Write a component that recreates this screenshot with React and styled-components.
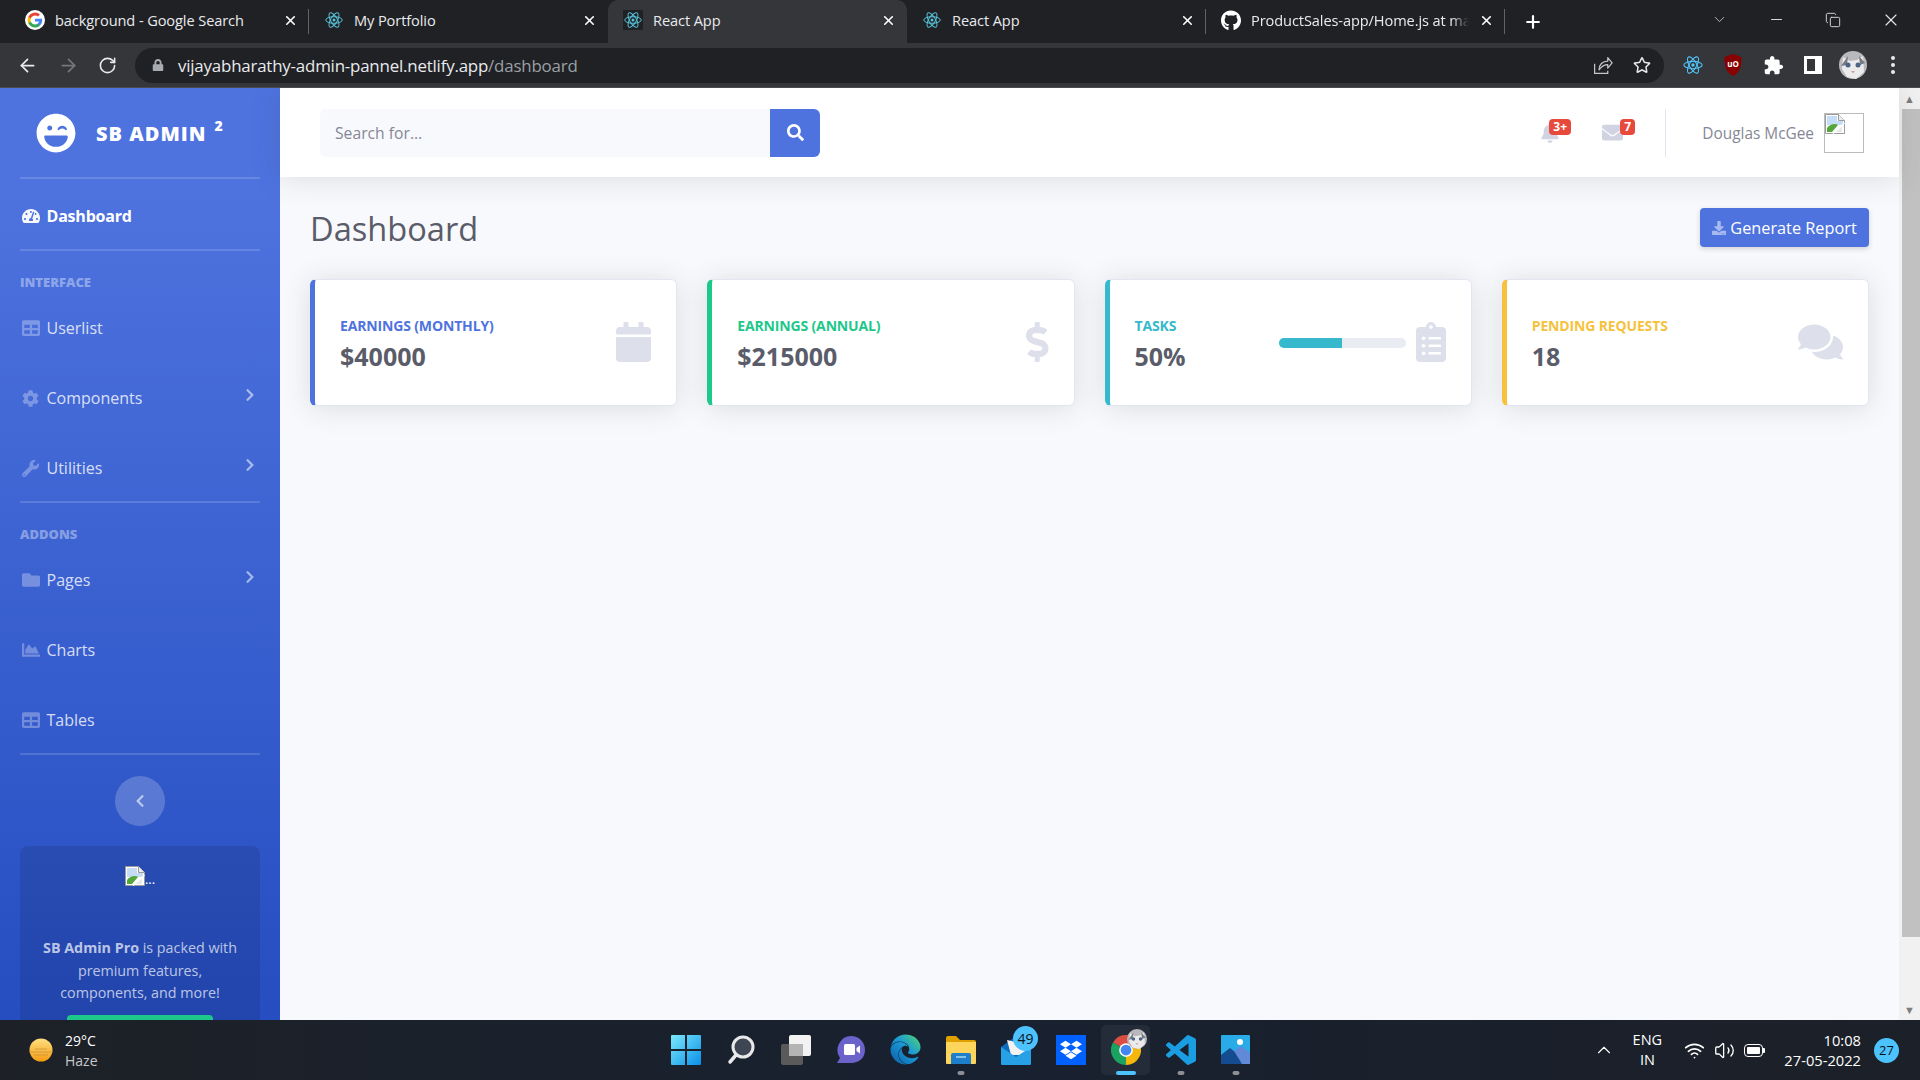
import React from 'react';
import styled, { createGlobalStyle } from 'styled-components';
import {
  FaBell, FaCalendar, FaChartArea, FaChevronLeft, FaChevronRight, FaClipboardList, FaCog, FaComments,
  FaDollarSign, FaDownload, FaDropbox, FaEdge, FaEnvelope, FaFolder, FaGithub, FaLaughWink, FaLock,
  FaSearch, FaRegStar, FaTable, FaTachometerAlt, FaWrench,
} from 'react-icons/fa';
import { ArrowLeft, ArrowRight, ChevronDown, ChevronUp, Copy, Minus, Plus, RotateCw, Volume2, Wifi, X } from 'lucide-react';

const GlobalStyle = createGlobalStyle`
  html, body { margin: 0; padding: 0; height: 100%; overflow: hidden; }
  body { font-family: "Open Sans", "Noto Sans", sans-serif; }
  * { box-sizing: border-box; }
`;

const ReactLogo = ({ size = 18, color = '#58c4dc' }) => (
  <svg width={size} height={size} viewBox="0 0 24 24" fill="none" stroke={color} strokeWidth="1.3">
    <ellipse cx="12" cy="12" rx="11" ry="4.4" />
    <ellipse cx="12" cy="12" rx="11" ry="4.4" transform="rotate(60 12 12)" />
    <ellipse cx="12" cy="12" rx="11" ry="4.4" transform="rotate(120 12 12)" />
    <circle cx="12" cy="12" r="2" fill={color} stroke="none" />
  </svg>
);

const GoogleLogo = () => (
  <svg width="20" height="20" viewBox="0 0 24 24">
    <circle cx="12" cy="12" r="12" fill="#fff" />
    <path d="M20.6 12.2c0-.6-.1-1.2-.2-1.8H12v3.4h4.8a4.1 4.1 0 0 1-1.8 2.7v2.2h2.9c1.700-1.600 2.700-3.900 2.700-6.500z" fill="#4285f4" />
    <path d="M12 21c2.400 0 4.500-.8 5.900-2.200L15 16.500c-.8.500-1.800.9-3 .9-2.300 0-4.300-1.600-5-3.700H4v2.300A9 9 0 0 0 12 21z" fill="#34a853" />
    <path d="M7 13.700a5.400 5.400 0 0 1 0-3.400V8H4a9 9 0 0 0 0 8l3-2.300z" fill="#fbbc05" />
    <path d="M12 6.600c1.300 0 2.500.5 3.400 1.300L18 5.400A9 9 0 0 0 4 8l3 2.300c.7-2.100 2.700-3.700 5-3.700z" fill="#ea4335" />
  </svg>
);

const BrokenImage = () => (
  <svg width="20" height="20" viewBox="0 0 20 20">
    <path d="M.5.5h13l6 6v13H.5z" fill="#fff" stroke="#9a9a9a" />
    <path d="M13.500.5v6h6" fill="#eee" stroke="#9a9a9a" />
    <path d="M2 2h10v5h6v4H2z" fill="#c5dcf6" />
    <path d="M2 18v-4c3-4 8-5 11-3l-6 7z" fill="#55a63a" />
    <path d="M10 18l7-7v7z" fill="#e8e8e8" />
    <path d="M8 19.500L19.500 9" stroke="#fff" strokeWidth="1.500" />
  </svg>
);

const ShareGlyph = () => (
  <svg width="21" height="21" viewBox="0 0 24 24" fill="none" stroke="#c4c7c5" strokeWidth="1.400">
    <path d="M3 10v11h15v-3" />
    <path d="M8 17c0-6 4-10 10-10V3l5 6-5 6v-4c-4 0-7 2-10 6z" strokeLinejoin="round" />
  </svg>
);

const UBlock = () => (
  <svg width="20" height="24" viewBox="0 0 20 24">
    <path d="M10 1l8.500 3c0 9-1 15-8.500 19C2.500 19 1.500 13 1.500 4z" fill="#800" />
    <text x="10" y="14" textAnchor="middle" fontSize="8" fontWeight="700" fill="#fff" fontFamily="Open Sans">uO</text>
  </svg>
);

const PuzzleGlyph = () => (
  <svg width="21" height="21" viewBox="0 0 24 24" fill="#fff">
    <path d="M20.500 11H19V7c0-1.100-.9-2-2-2h-4V3.500C13 2.120 11.880 1 10.500 1S8 2.120 8 3.500V5H4c-1.100 0-1.990.9-1.990 2v3.800H3.500c1.490 0 2.700 1.210 2.700 2.700s-1.210 2.700-2.700 2.700H2V20c0 1.100.9 2 2 2h3.800v-1.500c0-1.490 1.210-2.700 2.700-2.700 1.490 0 2.700 1.210 2.700 2.700V22H17c1.100 0 2-.9 2-2v-4h1.500c1.380 0 2.500-1.120 2.500-2.500S21.880 11 20.500 11z" />
  </svg>
);

const SidePanel = () => (
  <svg width="18" height="18" viewBox="0 0 18 18">
    <path d="M0 0h18v18H0z" fill="#fff" />
    <path d="M3 3h8v12H3z" fill="#35363a" />
  </svg>
);

const CatAvatar = ({ size = 28 }) => (
  <svg width={size} height={size} viewBox="0 0 28 28">
    <circle cx="14" cy="14" r="14" fill="#b9b9bd" />
    <path d="M4 6l7 4 7-1 6-4 1 16-8 7-9-2-5-8z" fill="#ecebec" />
    <path d="M2 15l7-10-1 9zM26 12l-6-7 1 9z" fill="#777a80" />
    <circle cx="9" cy="14" r="2.500" fill="#4c6486" />
    <circle cx="19" cy="14" r="2.500" fill="#4c6486" />
    <path d="M12 20h4l-2 2.500z" fill="#c9a2a6" />
  </svg>
);

const Win11Logo = () => (
  <svg width="30" height="30" viewBox="0 0 30 30">
    <defs>
      <linearGradient id="winG" x1="0" y1="0" x2="1" y2="1">
        <stop offset="0" stopColor="#7ceafc" />
        <stop offset="1" stopColor="#0a8fe8" />
      </linearGradient>
    </defs>
    <path d="M0 1a1 1 0 0 1 1-1h13v14H0zM16 0h13a1 1 0 0 1 1 1v13H16zM0 16h14v14H1a1 1 0 0 1-1-1zM16 16h14v13a1 1 0 0 1-1 1H16z" fill="url(#winG)" />
  </svg>
);

const SearchGlyph = () => (
  <svg width="28" height="30" viewBox="0 0 28 30">
    <circle cx="16" cy="12" r="10" fill="#3e4653" stroke="#e9e9e9" strokeWidth="3" />
    <path d="M9 20l-6 7" stroke="#e9e9e9" strokeWidth="3.500" strokeLinecap="round" />
  </svg>
);

const TaskView = () => (
  <svg width="30" height="30" viewBox="0 0 30 30">
    <rect x="0" y="9" width="22" height="21" rx="2" fill="#5a5a5a" />
    <rect x="8" y="0" width="22" height="21" rx="2" fill="#f2f2f2" />
    <rect x="8" y="9" width="14" height="12" fill="#b4b4b4" />
  </svg>
);

const ChatGlyph = () => (
  <svg width="30" height="30" viewBox="0 0 30 30">
    <path d="M15 1c8 0 14 6 14 14s-6 13-14 13H1l3-5a14 14 0 0 1 11-22z" fill="#6b63c9" />
    <rect x="8" y="9" width="11" height="11" rx="1.500" fill="#fff" />
    <path d="M20.500 13l3.500-2.500v8L20.500 16z" fill="#fff" />
  </svg>
);

const EdgeGlyph = () => (
  <>
    <svg width="0" height="0" style={{ position: 'absolute' }}>
      <defs>
        <linearGradient id="edgeG" x1="0" y1="1" x2="1" y2="0">
          <stop offset="0" stopColor="#0b5aa8" />
          <stop offset=".55" stopColor="#1a9ad6" />
          <stop offset="1" stopColor="#53d96a" />
        </linearGradient>
      </defs>
    </svg>
    <FaEdge size={31} fill="url(#edgeG)" />
  </>
);

const FolderGlyph = () => (
  <svg width="30" height="30" viewBox="0 0 30 30">
    <path d="M0 3a2 2 0 0 1 2-2h8l4 4h14a2 2 0 0 1 2 2v3H0z" fill="#e0a100" />
    <path d="M0 7h30v21a1 1 0 0 1-1 1H1a1 1 0 0 1-1-1z" fill="#fdd55c" />
    <path d="M5 29v-9a2 2 0 0 1 2-2h16a2 2 0 0 1 2 2v9z" fill="#1d7fc9" />
    <path d="M10 22h10" stroke="#a8d8f5" strokeWidth="1.500" />
  </svg>
);

const MailGlyph = () => (
  <svg width="30" height="30" viewBox="0 0 30 30">
    <path d="M0 12L15 1l15 11v17H0z" fill="#0f6cbd" />
    <path d="M6 5l18 4v11H10z" fill="#f2f2f2" />
    <path d="M0 12l15 10 15-10v17a1 1 0 0 1-1 1H1a1 1 0 0 1-1-1z" fill="#27a0e6" />
  </svg>
);

const DropboxTile = styled.div`
  width: 30px;
  height: 30px;
  background: #0061fe;
  display: flex;
  align-items: center;
  justify-content: center;
  color: #fff;
`;

const ChromeGlyph = () => (
  <svg width="30" height="30" viewBox="0 0 24 24">
    <path d="M12 12L1.600 6A12 12 0 0 1 22.400 6z" fill="#db4437" />
    <path d="M12 12L1.600 6A12 12 0 0 0 12 24z" fill="#0f9d58" />
    <path d="M12 12l10.400-6A12 12 0 0 1 12 24z" fill="#f4b400" />
    <circle cx="12" cy="12" r="5.500" fill="#fff" />
    <circle cx="12" cy="12" r="4.300" fill="#3a80f0" />
  </svg>
);

const VsCode = () => (
  <svg width="30" height="30" viewBox="0 0 24 24">
    <path d="M23.150 2.587L18.210.21a1.494 1.494 0 0 0-1.705.29l-9.460 8.630-4.120-3.128a.999.999 0 0 0-1.276.057L.327 7.261A1 1 0 0 0 .326 8.740L3.899 12 .326 15.260a1 1 0 0 0 .001 1.479L1.650 17.940a.999.999 0 0 0 1.276.057l4.120-3.128 9.460 8.630a1.492 1.492 0 0 0 1.704.29l4.942-2.377A1.500 1.500 0 0 0 24 20.060V3.939a1.500 1.500 0 0 0-.85-1.352zm-5.146 14.861L10.826 12l7.178-5.448v10.896z" fill="#1b9de2" />
  </svg>
);

const PhotosGlyph = () => (
  <svg width="29" height="29" viewBox="0 0 29 29">
    <rect width="29" height="29" rx="1" fill="#29abe8" />
    <circle cx="19" cy="7" r="3" fill="#fff" />
    <path d="M0 29V20l9-7 10 8 2 8z" fill="#154b8f" />
    <path d="M13 16l7-5 9 7v11h-8z" fill="#6288d8" />
  </svg>
);

const HazeSun = () => (
  <svg width="26" height="24" viewBox="0 0 26 24">
    <defs>
      <linearGradient id="sunG" x1="0" y1="0" x2="0" y2="1">
        <stop offset="0" stopColor="#ffdf80" />
        <stop offset="1" stopColor="#f59c12" />
      </linearGradient>
    </defs>
    <circle cx="13" cy="12" r="11.500" fill="url(#sunG)" />
    <path d="M7 11h12M1 14h24M6 17h14" stroke="#b98a3a" strokeWidth="1" opacity=".6" />
  </svg>
);

const tabs = [
  { title: 'background - Google Search', icon: <GoogleLogo />, sep: true },
  { title: 'My Portfolio', icon: <ReactLogo /> },
  { title: 'React App', icon: <ReactLogo />, active: true },
  { title: 'React App', icon: <ReactLogo />, sep: true },
  { title: 'ProductSales-app/Home.js at main', icon: <FaGithub size={21} color="#fff" />, sep: true, fade: true },
];

const stats = [
  { label: 'Earnings (Monthly)', value: '$40000', color: '#4e73df', icon: <FaCalendar />, iconWidth: 35 },
  { label: 'Earnings (Annual)', value: '$215000', color: '#1cc88a', icon: <FaDollarSign />, iconWidth: 22.5 },
  { label: 'Tasks', value: '50%', color: '#36b9cc', progress: 50, icon: <FaClipboardList />, iconWidth: 30 },
  { label: 'Pending Requests', value: '18', color: '#f6c23e', icon: <FaComments />, iconWidth: 45 },
];

function App() {
  return (
    <Screen>
      <GlobalStyle />
      <TabStrip>
        {tabs.map((t, i) => (
          <Tab key={i} $active={t.active} $sep={t.sep}>
            <Favicon $active={t.active}>{t.icon}</Favicon>
            <TabTitle $fade={t.fade}>{t.title}</TabTitle>
            <X size={15} strokeWidth={2.6} color="#fff" />
          </Tab>
        ))}
        <NewTab><Plus size={20} strokeWidth={2.6} /></NewTab>
        <WindowControls>
          <ChevronDown size={17} strokeWidth={1.2} color="#ccc" />
          <Minus size={17} strokeWidth={1.3} />
          <Copy size={16} strokeWidth={1.3} />
          <X size={20} strokeWidth={1.3} />
        </WindowControls>
      </TabStrip>

      <Toolbar>
        <ToolButton><ArrowLeft size={21} strokeWidth={2} /></ToolButton>
        <ToolButton $muted><ArrowRight size={21} strokeWidth={2} /></ToolButton>
        <ToolButton><RotateCw size={19} strokeWidth={2} /></ToolButton>
        <Omnibox>
          <FaLock size={12} color="#a8abb0" />
          <Url>vijayabharathy-admin-pannel.netlify.app<UrlPath>/dashboard</UrlPath></Url>
          <OmniIcons>
            <ShareGlyph />
            <FaRegStar size={18} color="#e8eaed" />
          </OmniIcons>
        </Omnibox>
        <Extensions>
          <ExtTile><ReactLogo size={20} color="#4fc3f7" /></ExtTile>
          <ExtTile><UBlock /></ExtTile>
          <ExtTile><PuzzleGlyph /></ExtTile>
          <ExtTile><SidePanel /></ExtTile>
          <ExtTile><CatAvatar /></ExtTile>
          <ExtTile><Dots><i /><i /><i /></Dots></ExtTile>
        </Extensions>
      </Toolbar>

      <Viewport>
        <Sidebar>
          <Brand>
            <FaLaughWink size={40} color="#fff" />
            <BrandText>SB ADMIN <sup>2</sup></BrandText>
          </Brand>
          <Divider />
          <NavItem $active><NavIcon><FaTachometerAlt size={18} /></NavIcon>Dashboard</NavItem>
          <Divider />
          <NavHeading>INTERFACE</NavHeading>
          <NavItem><NavIcon><FaTable size={18} /></NavIcon>Userlist</NavItem>
          <NavItem><NavIcon><FaCog size={17} /></NavIcon>Components<NavArrow><FaChevronRight size={14} /></NavArrow></NavItem>
          <NavItem><NavIcon><FaWrench size={17} /></NavIcon>Utilities<NavArrow><FaChevronRight size={14} /></NavArrow></NavItem>
          <Divider />
          <NavHeading>ADDONS</NavHeading>
          <NavItem><NavIcon><FaFolder size={18} /></NavIcon>Pages<NavArrow><FaChevronRight size={14} /></NavArrow></NavItem>
          <NavItem><NavIcon><FaChartArea size={18} /></NavIcon>Charts</NavItem>
          <NavItem><NavIcon><FaTable size={18} /></NavIcon>Tables</NavItem>
          <Divider />
          <SidebarToggle><FaChevronLeft size={14} /></SidebarToggle>
          <PromoCard>
            <PromoImage><BrokenImage /><span>...</span></PromoImage>
            <PromoText><strong>SB Admin Pro</strong> is packed with premium features, components, and more!</PromoText>
            <PromoButton />
          </PromoCard>
        </Sidebar>

        <Main>
          <Topbar>
            <SearchBox>
              <SearchInput>Search for...</SearchInput>
              <SearchButton><FaSearch size={17} /></SearchButton>
            </SearchBox>
            <TopbarRight>
              <AlertIcon>
                <FaBell size={20} />
                <Badge $left={9}>3+</Badge>
              </AlertIcon>
              <AlertIcon>
                <FaEnvelope size={21} />
                <Badge $left={18}>7</Badge>
              </AlertIcon>
              <TopDivider />
              <UserName>Douglas McGee</UserName>
              <Avatar><BrokenImage /></Avatar>
            </TopbarRight>
          </Topbar>

          <Content>
            <TitleRow>
              <PageTitle>Dashboard</PageTitle>
              <ReportButton><FaDownload size={14} color="rgba(255,255,255,.5)" />Generate Report</ReportButton>
            </TitleRow>
            <CardGrid>
              {stats.map(s => (
                <StatCard key={s.label} $color={s.color}>
                  <StatInfo>
                    <StatLabel $color={s.color}>{s.label}</StatLabel>
                    <StatValue>{s.value}</StatValue>
                  </StatInfo>
                  {s.progress && (
                    <Progress><ProgressFill $color={s.color} style={{ width: `${s.progress}%` }} /></Progress>
                  )}
                  <StatIcon $w={s.iconWidth}>{s.icon}</StatIcon>
                </StatCard>
              ))}
            </CardGrid>
          </Content>
        </Main>

        <Scrollbar>
          <ScrollArrow>▲</ScrollArrow>
          <ScrollThumb />
          <ScrollArrow>▼</ScrollArrow>
        </Scrollbar>
      </Viewport>

      <Taskbar>
        <Weather>
          <HazeSun />
          <WeatherText>
            <div>29°C</div>
            <WeatherSub>Haze</WeatherSub>
          </WeatherText>
        </Weather>
        <TaskIcons>
          <TaskCell><Win11Logo /></TaskCell>
          <TaskCell><SearchGlyph /></TaskCell>
          <TaskCell><TaskView /></TaskCell>
          <TaskCell><ChatGlyph /></TaskCell>
          <TaskCell><EdgeGlyph /></TaskCell>
          <TaskCell $dot><FolderGlyph /></TaskCell>
          <TaskCell><MailGlyph /><MailBadge>49</MailBadge></TaskCell>
          <TaskCell><DropboxTile><FaDropbox size={22} /></DropboxTile></TaskCell>
          <TaskCell $active>
            <ChromeGlyph />
            <ChromeAvatar><CatAvatar size={20} /></ChromeAvatar>
          </TaskCell>
          <TaskCell $dot><VsCode /></TaskCell>
          <TaskCell $dot><PhotosGlyph /></TaskCell>
        </TaskIcons>
        <Tray>
          <ChevronUp size={22} strokeWidth={1.2} />
          <Lang>ENG<br />IN</Lang>
          <TrayIcons>
            <Wifi size={21} strokeWidth={2} />
            <Volume2 size={21} strokeWidth={1.5} />
            <Battery><BatteryFill /></Battery>
          </TrayIcons>
          <Clock>10:08<br />27-05-2022</Clock>
          <NotifyBadge>27</NotifyBadge>
        </Tray>
      </Taskbar>
    </Screen>
  );
}

const Screen = styled.div`
  width: 1920px;
  height: 1080px;
  display: flex;
  flex-direction: column;
  overflow: hidden;
  background: #f8f9fc;
`;

const TabStrip = styled.div`
  height: 43px;
  flex: none;
  display: flex;
  padding-left: 10px;
  background: #202124;
  color: #e8eaed;
`;

const Tab = styled.div`
  position: relative;
  width: 299px;
  display: flex;
  align-items: center;
  padding: 0 11px 3px 15px;
  gap: 10px;
  font-size: 14.6px;
  letter-spacing: -0.1px;
  border-radius: 10px 10px 0 0;
  background: ${p => (p.$active ? '#35363a' : 'transparent')};
  &::after {
    content: '';
    display: ${p => (p.$sep ? 'block' : 'none')};
    position: absolute;
    right: 0;
    top: 9px;
    height: 25px;
    width: 1px;
    background: #5f6368;
  }
`;

const Favicon = styled.div`
  width: 20px;
  height: 20px;
  flex: none;
  display: flex;
  align-items: center;
  justify-content: center;
  background: ${p => (p.$active ? '#202124' : 'transparent')};
`;

const TabTitle = styled.div`
  flex: 1;
  white-space: nowrap;
  overflow: hidden;
  color: #e8eaed;
  ${p => p.$fade && 'mask-image: linear-gradient(90deg, #000 92%, transparent 100%);'}
`;

const NewTab = styled.div`
  width: 56px;
  display: flex;
  align-items: center;
  justify-content: center;
  color: #fff;
`;

const WindowControls = styled.div`
  margin-left: auto;
  display: flex;
  align-items: center;
  gap: 40px;
  padding: 0 19px 4px 0;
  color: #e8eaed;
`;

const Toolbar = styled.div`
  height: 45px;
  flex: none;
  display: flex;
  align-items: center;
  padding-left: 7px;
  background: #35363a;
  border-bottom: 1px solid #4a4b4e;
`;

const ToolButton = styled.div`
  width: 41px;
  display: flex;
  justify-content: center;
  color: ${p => (p.$muted ? '#75777b' : '#e8eaed')};
  &:nth-child(3) { margin-left: -2px; margin-right: 2px; }
`;

const Omnibox = styled.div`
  width: 1529px;
  height: 35px;
  margin-left: 5px;
  display: flex;
  align-items: center;
  padding: 0 13px 0 17px;
  border-radius: 18px;
  background: #202124;
`;

const Url = styled.div`
  margin-left: 14px;
  font-size: 16.9px;
  letter-spacing: -0.2px;
  color: #e8eaed;
  white-space: nowrap;
`;

const UrlPath = styled.span`
  color: #9aa0a6;
`;

const OmniIcons = styled.div`
  margin-left: auto;
  display: flex;
  align-items: center;
  gap: 20px;
`;

const Extensions = styled.div`
  display: flex;
  align-items: center;
  margin-left: 9px;
`;

const ExtTile = styled.div`
  width: 40px;
  display: flex;
  justify-content: center;
  align-items: center;
`;

const Dots = styled.div`
  display: flex;
  flex-direction: column;
  gap: 3px;
  i {
    width: 4px;
    height: 4px;
    border-radius: 50%;
    background: #e8eaed;
  }
`;

const Viewport = styled.div`
  flex: 1;
  min-height: 0;
  display: flex;
  overflow: hidden;
`;

const Sidebar = styled.aside`
  width: 280px;
  flex: none;
  display: flex;
  flex-direction: column;
  background: linear-gradient(180deg, #4e73df 10%, #224abe 100%);
  background-size: 100% 1012px;
  overflow: hidden;
`;

const Brand = styled.div`
  height: 89px;
  flex: none;
  display: flex;
  align-items: center;
  padding-left: 36px;
  gap: 20px;
  color: #fff;
`;

const BrandText = styled.div`
  font-size: 20px;
  font-weight: 800;
  letter-spacing: 1px;
  white-space: pre;
  padding-top: 2px;
  sup {
    font-size: 14px;
    margin-left: 2px;
    line-height: 0;
    vertical-align: 10px;
  }
`;

const Divider = styled.div`
  height: 2px;
  flex: none;
  margin: 0 20px;
  background: rgba(255, 255, 255, 0.15);
`;

const NavItem = styled.div`
  height: 70px;
  flex: none;
  display: flex;
  align-items: center;
  padding: 4px 23px 0 22px;
  font-size: 16px;
  letter-spacing: ${p => (p.$active ? '-0.2px' : '0')};
  font-weight: ${p => (p.$active ? 700 : 400)};
  color: ${p => (p.$active ? '#fff' : 'rgba(255, 255, 255, 0.8)')};
  svg { color: ${p => (p.$active ? 'rgba(255,255,255,.95)' : 'rgba(255, 255, 255, 0.3)')}; }
`;

const NavIcon = styled.span`
  width: 24.5px;
  flex: none;
  display: flex;
  align-items: center;
`;

const NavArrow = styled.span`
  margin: -6px 0 0 auto;
  display: flex;
  svg { color: rgba(255, 255, 255, 0.55); }
`;

const NavHeading = styled.div`
  height: 40px;
  flex: none;
  padding: 22px 0 0 20px;
  font-size: 13px;
  line-height: 18px;
  font-weight: 800;
  color: rgba(255, 255, 255, 0.4);
`;

const SidebarToggle = styled.div`
  width: 50px;
  height: 50px;
  flex: none;
  margin: 21px auto 0;
  border-radius: 50%;
  display: flex;
  align-items: center;
  justify-content: center;
  background: rgba(255, 255, 255, 0.2);
  color: rgba(255, 255, 255, 0.6);
`;

const PromoCard = styled.div`
  margin: 20px 20px 0;
  padding: 20px 16px;
  flex: none;
  border-radius: 8px;
  background: rgba(0, 0, 0, 0.1);
  text-align: center;
`;

const PromoImage = styled.div`
  height: 20px;
  display: flex;
  justify-content: center;
  align-items: flex-end;
  color: #fff;
  font-size: 13px;
  line-height: 14px;
  margin-bottom: 51px;
`;

const PromoText = styled.p`
  margin: 0 0 10px;
  font-size: 14.3px;
  line-height: 22.5px;
  color: rgba(255, 255, 255, 0.7);
`;

const PromoButton = styled.div`
  width: 146px;
  height: 36px;
  margin: 0 auto;
  border-radius: 4px;
  background: #1cc88a;
`;

const Main = styled.main`
  flex: 1;
  min-width: 0;
  display: flex;
  flex-direction: column;
`;

const Topbar = styled.header`
  height: 89px;
  flex: none;
  display: flex;
  align-items: center;
  justify-content: space-between;
  padding: 0 35px 0 40px;
  background: #fff;
  box-shadow: 0 2px 28px rgba(58, 59, 69, 0.15);
  z-index: 1;
`;

const SearchBox = styled.div`
  width: 500px;
  height: 48px;
  display: flex;
`;

const SearchInput = styled.div`
  flex: 1;
  display: flex;
  align-items: center;
  padding-left: 15px;
  font-size: 15.7px;
  color: #858796;
  background: #f8f9fc;
  border-radius: 6px 0 0 6px;
`;

const SearchButton = styled.div`
  width: 50px;
  display: flex;
  align-items: center;
  justify-content: center;
  color: #fff;
  background: #4e73df;
  border-radius: 0 6px 6px 0;
`;

const TopbarRight = styled.div`
  display: flex;
  align-items: center;
`;

const AlertIcon = styled.div`
  position: relative;
  width: 34px;
  height: 24px;
  margin-right: 29px;
  display: flex;
  align-items: center;
  color: #d1d3e2;
  &:first-child { margin-right: 28px; }
`;

const Badge = styled.span`
  position: absolute;
  left: ${p => p.$left}px;
  top: -2px;
  height: 16px;
  padding: 0 4px;
  border-radius: 4px;
  background: #e74a3b;
  color: #fff;
  font-size: 12px;
  font-weight: 700;
  line-height: 16px;
`;

const TopDivider = styled.div`
  width: 1px;
  height: 48px;
  margin: 0 36px 0 0;
  background: #e3e6f0;
`;

const UserName = styled.div`
  font-size: 15.4px;
  color: #858796;
  margin: 2px 10px 0 0;
`;

const Avatar = styled.div`
  width: 40px;
  height: 40px;
  border: 1px solid #bbb;
  background: #fff;
`;

const Content = styled.div`
  padding: 31px 30px 0;
`;

const TitleRow = styled.div`
  height: 39px;
  margin-bottom: 32px;
  display: flex;
  align-items: center;
  justify-content: space-between;
`;

const PageTitle = styled.h1`
  margin: 0;
  font-size: 32.6px;
  font-weight: 400;
  color: #5a5c69;
  padding-top: 2px;
`;

const ReportButton = styled.div`
  height: 39px;
  width: 169px;
  display: flex;
  align-items: center;
  justify-content: center;
  gap: 4px;
  border-radius: 4px;
  background: #4e73df;
  color: #fff;
  font-size: 16.3px;
  box-shadow: 0 2px 5px rgba(58, 59, 69, 0.2);
`;

const CardGrid = styled.div`
  display: grid;
  grid-template-columns: repeat(4, 1fr);
  gap: 30px;
`;

const StatCard = styled.div`
  height: 127px;
  display: flex;
  align-items: center;
  padding: 0 25px 0 25px;
  background: #fff;
  border: 1px solid #e3e6f0;
  border-left: 5px solid ${p => p.$color};
  border-radius: 6px;
  box-shadow: 0 2px 28px rgba(58, 59, 69, 0.15);
`;

const StatInfo = styled.div`
  flex: 1;
  min-width: 0;
  padding-top: 4px;
`;

const StatLabel = styled.div`
  font-size: 14px;
  line-height: 18px;
  font-weight: 700;
  text-transform: uppercase;
  letter-spacing: -0.15px;
  color: ${p => p.$color};
`;

const StatValue = styled.div`
  margin-top: 5px;
  font-size: 25px;
  line-height: 33px;
  font-weight: 700;
  color: #5a5c69;
`;

const Progress = styled.div`
  width: 127px;
  height: 10px;
  margin-right: 10px;
  border-radius: 5px;
  background: #eaecf4;
  overflow: hidden;
`;

const ProgressFill = styled.div`
  height: 100%;
  background: ${p => p.$color};
`;

const StatIcon = styled.div`
  display: flex;
  margin-top: -1px;
  color: #dddfeb;
  svg {
    height: 40px;
    width: ${p => p.$w}px;
  }
`;

const Scrollbar = styled.div`
  width: 21px;
  flex: none;
  display: flex;
  flex-direction: column;
  align-items: center;
  background: #f1f1f1;
`;

const ScrollArrow = styled.div`
  height: 21px;
  flex: none;
  line-height: 21px;
  font-size: 11px;
  color: #7d7d7d;
`;

const ScrollThumb = styled.div`
  width: 18px;
  margin-left: 2px;
  height: 828px;
  flex: none;
  background: #c1c1c1;
  margin-bottom: auto;
`;

const Taskbar = styled.footer`
  height: 60px;
  flex: none;
  position: relative;
  display: flex;
  align-items: center;
  justify-content: space-between;
  padding-left: 28px;
  color: #fff;
  background: linear-gradient(90deg, #1d2127 0%, #182130 50%, #1c2028 100%);
`;

const Weather = styled.div`
  display: flex;
  align-items: center;
  gap: 11px;
`;

const WeatherText = styled.div`
  font-size: 14px;
  line-height: 20px;
  padding-top: 2px;
`;

const WeatherSub = styled.div`
  color: #c8c8c8;
`;

const TaskIcons = styled.div`
  position: absolute;
  left: 658px;
  top: 0;
  bottom: 0;
  display: flex;
`;

const TaskCell = styled.div`
  position: relative;
  width: 55px;
  height: 60px;
  display: flex;
  align-items: center;
  justify-content: center;
  padding-bottom: 1px;
  &::before {
    content: '';
    display: ${p => (p.$active ? 'block' : 'none')};
    position: absolute;
    inset: 5px 3px;
    border-radius: 5px;
    background: rgba(255, 255, 255, 0.05);
  }
  &::after {
    content: '';
    display: ${p => (p.$dot || p.$active ? 'block' : 'none')};
    position: absolute;
    left: 50%;
    bottom: 5px;
    transform: translateX(-50%);
    width: ${p => (p.$active ? '20px' : '7px')};
    height: 4px;
    border-radius: 2px;
    background: ${p => (p.$active ? '#4cc2ff' : '#8c8f94')};
  }
`;

const MailBadge = styled.span`
  position: absolute;
  left: 25px;
  top: 6px;
  width: 25px;
  height: 25px;
  border-radius: 50%;
  background: #4cc2ff;
  color: #111;
  font-size: 14px;
  line-height: 25px;
  text-align: center;
`;

const ChromeAvatar = styled.span`
  position: absolute;
  right: 6px;
  top: 9px;
  display: flex;
`;

const Tray = styled.div`
  display: flex;
  align-items: center;
  padding-right: 21px;
`;

const Lang = styled.div`
  margin-left: 14px;
  width: 36px;
  text-align: center;
  font-size: 14.5px;
  line-height: 20px;
`;

const TrayIcons = styled.div`
  margin-left: 19px;
  display: flex;
  align-items: center;
  gap: 9px;
`;

const Battery = styled.div`
  position: relative;
  width: 19px;
  height: 13px;
  padding: 2px;
  border: 1px solid #fff;
  border-radius: 4px;
  &::after {
    content: '';
    position: absolute;
    right: -3px;
    top: 3px;
    width: 2px;
    height: 5px;
    background: #fff;
    border-radius: 0 1px 1px 0;
  }
`;

const BatteryFill = styled.div`
  height: 100%;
  width: 100%;
  background: #fff;
  border-radius: 1px;
`;

const Clock = styled.div`
  margin-left: 21px;
  text-align: right;
  font-size: 14.7px;
  line-height: 20px;
`;

const NotifyBadge = styled.div`
  margin-left: 13px;
  width: 25px;
  height: 25px;
  border-radius: 50%;
  background: #4cc2ff;
  color: #111;
  font-size: 13px;
  line-height: 25px;
  text-align: center;
`;

export default App;
